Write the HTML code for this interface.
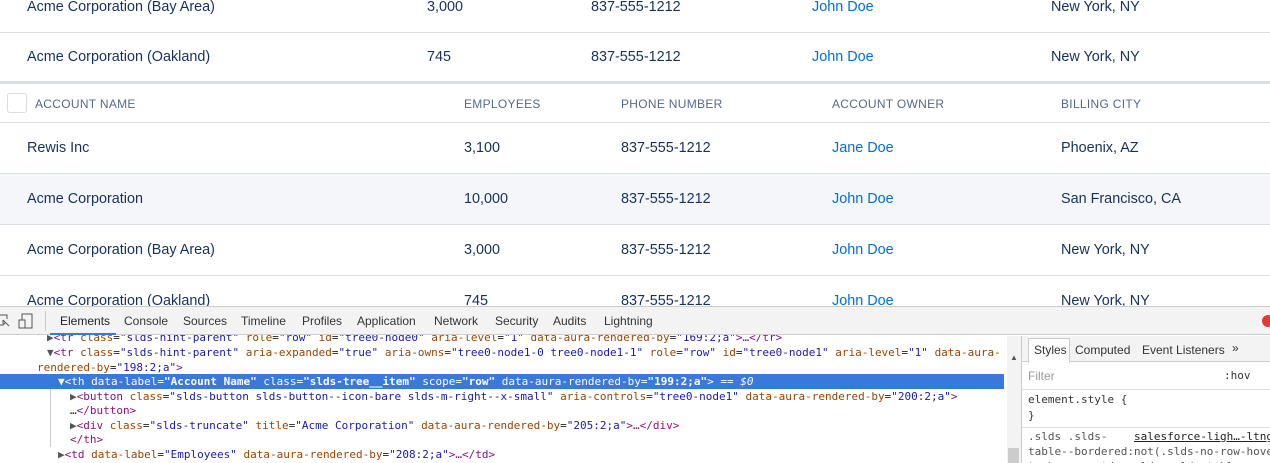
<!DOCTYPE html><html style="width:1270px;height:463px;overflow:hidden"><head><style>
*{margin:0;padding:0;box-sizing:border-box}
body{width:1270px;height:463px;overflow:hidden;background:#fff;font-family:"Liberation Sans",sans-serif;position:relative;color:#16325c}
.a{position:absolute;white-space:nowrap}
.r{position:absolute;left:0;width:1270px;border-bottom:1px solid #d8dde6;font-size:14.4px}
.r span{position:absolute;top:50%;transform:translateY(-50%)}
.l{color:#0070d2}
.h span{font-size:12px;color:#54698d;letter-spacing:.3px}
.dt{position:absolute;left:0;top:306px;width:1270px;height:157px;background:#fff;border-top:1px solid #ccc;overflow:hidden}
.tb{position:absolute;top:0;left:0;width:1270px;height:28px;background:#f3f3f3;border-bottom:1px solid #ccc;font-size:12px;color:#333;z-index:2}
.tb span{position:absolute;top:7px}
.code{position:absolute;left:0;top:23px;width:1007px;height:134px;font-family:"DejaVu Sans Mono",monospace;font-size:11px;color:#222}
.code div{position:absolute;white-space:nowrap;height:15px;line-height:15px}
.t{color:#881280}.n{color:#994500}.v{color:#1a1aa6}
.sel{background:#3879d9;color:#fff}
.sel .t,.sel .n,.sel .v{color:#fff}
</style></head><body>
<div class="r" style="top:-18px;height:51px"><span style="left:27px">Acme Corporation (Bay Area)</span><span style="left:427px">3,000</span><span style="left:591px">837-555-1212</span><span class="l" style="left:812px">John Doe</span><span style="left:1051px">New York, NY</span></div>
<div class="r" style="top:33px;height:51px;border-bottom:3px solid #d8dde6"><span style="left:27px">Acme Corporation (Oakland)</span><span style="left:427px">745</span><span style="left:591px">837-555-1212</span><span class="l" style="left:812px">John Doe</span><span style="left:1051px">New York, NY</span></div>
<div class="r h" style="top:86px;height:37px"><div class="a" style="left:7px;top:7px;width:20px;height:20px;border:1px solid #d8dde6;border-radius:3px"></div><span style="left:35px">ACCOUNT NAME</span><span style="left:464px">EMPLOYEES</span><span style="left:621px">PHONE NUMBER</span><span style="left:832px">ACCOUNT OWNER</span><span style="left:1061px">BILLING CITY</span></div>
<div class="r" style="top:123px;height:51px"><span style="left:27px">Rewis Inc</span><span style="left:464px">3,100</span><span style="left:621px">837-555-1212</span><span class="l" style="left:832px">Jane Doe</span><span style="left:1061px">Phoenix, AZ</span></div>
<div class="r" style="top:174px;height:51px;background:#f4f6f9"><span style="left:27px">Acme Corporation</span><span style="left:464px">10,000</span><span style="left:621px">837-555-1212</span><span class="l" style="left:832px">John Doe</span><span style="left:1061px">San Francisco, CA</span></div>
<div class="r" style="top:225px;height:51px"><span style="left:27px">Acme Corporation (Bay Area)</span><span style="left:464px">3,000</span><span style="left:621px">837-555-1212</span><span class="l" style="left:832px">John Doe</span><span style="left:1061px">New York, NY</span></div>
<div class="r" style="top:276px;height:51px"><span style="left:27px">Acme Corporation (Oakland)</span><span style="left:464px">745</span><span style="left:621px">837-555-1212</span><span class="l" style="left:832px">John Doe</span><span style="left:1061px">New York, NY</span></div>
<div class="dt">
<div class="tb">
<svg class="a" style="left:-4px;top:6px" width="14" height="16"><path d="M2 2h9v4M2 2v10h4M7 7l6 6M7 7v5l2-2" stroke="#555" fill="none"/></svg>
<svg class="a" style="left:17px;top:5px" width="18" height="18"><rect x="5" y="2" width="10" height="14" stroke="#555" fill="none"/><rect x="2" y="8" width="6" height="8" stroke="#555" fill="#f3f3f3"/></svg>
<div class="a" style="left:45px;top:4px;width:1px;height:20px;background:#ccc"></div>
<span style="left:60px;color:#222">Elements</span><div class="a" style="left:50px;top:26px;width:66px;height:2px;background:#3879d9"></div>
<span style="left:124px">Console</span><span style="left:183px">Sources</span><span style="left:241px">Timeline</span><span style="left:302px">Profiles</span><span style="left:357px">Application</span><span style="left:434px">Network</span><span style="left:495px">Security</span><span style="left:553px">Audits</span><span style="left:604px">Lightning</span>
<div class="a" style="left:1262px;top:8px;width:12px;height:12px;border-radius:6px;background:#e53935"></div>
</div>
<div class="code">
<div style="left:47px;top:0"><span style="color:#555">▶</span><span class="t">&lt;tr </span><span class="n">class</span>=<span class="v">"slds-hint-parent"</span> <span class="n">role</span>=<span class="v">"row"</span> <span class="n">id</span>=<span class="v">"tree0-node0"</span> <span class="n">aria-level</span>=<span class="v">"1"</span> <span class="n">data-aura-rendered-by</span>=<span class="v">"169:2;a"</span><span class="t">&gt;…&lt;/tr&gt;</span></div>
<div style="left:47px;top:15px"><span style="color:#555">▼</span><span class="t">&lt;tr </span><span class="n">class</span>=<span class="v">"slds-hint-parent"</span> <span class="n">aria-expanded</span>=<span class="v">"true"</span> <span class="n">aria-owns</span>=<span class="v">"tree0-node1-0 tree0-node1-1"</span> <span class="n">role</span>=<span class="v">"row"</span> <span class="n">id</span>=<span class="v">"tree0-node1"</span> <span class="n">aria-level</span>=<span class="v">"1"</span> <span class="n">data-aura-</span></div>
<div style="left:37px;top:30px"><span class="n">rendered-by</span>=<span class="v">"198:2;a"</span><span class="t">&gt;</span></div>
<div class="sel" style="left:0;top:44px;width:1004px;padding-left:58px">▼<span class="t">&lt;th </span><span class="n">data-label</span>=<b>"Account Name"</b> <span class="n">class</span>=<b>"slds-tree__item"</b> <span class="n">scope</span>=<b>"row"</b> <span class="n">data-aura-rendered-by</span>=<b>"199:2;a"</b><span class="t">&gt;</span> == <i>$0</i></div>
<div style="left:70px;top:59px"><span style="color:#555">▶</span><span class="t">&lt;button </span><span class="n">class</span>=<span class="v">"slds-button slds-button--icon-bare slds-m-right--x-small"</span> <span class="n">aria-controls</span>=<span class="v">"tree0-node1"</span> <span class="n">data-aura-rendered-by</span>=<span class="v">"200:2;a"</span><span class="t">&gt;</span></div>
<div style="left:70px;top:73px">…<span class="t">&lt;/button&gt;</span></div>
<div style="left:70px;top:88px"><span style="color:#555">▶</span><span class="t">&lt;div </span><span class="n">class</span>=<span class="v">"slds-truncate"</span> <span class="n">title</span>=<span class="v">"Acme Corporation"</span> <span class="n">data-aura-rendered-by</span>=<span class="v">"205:2;a"</span><span class="t">&gt;…&lt;/div&gt;</span></div>
<div style="left:70px;top:102px"><span class="t">&lt;/th&gt;</span></div>
<div style="left:58px;top:117px"><span style="color:#555">▶</span><span class="t">&lt;td </span><span class="n">data-label</span>=<span class="v">"Employees"</span> <span class="n">data-aura-rendered-by</span>=<span class="v">"208:2;a"</span><span class="t">&gt;…&lt;/td&gt;</span></div>
<div style="left:50px;top:59px;width:1px;height:58px;background:#ccc"></div>
</div>
<div class="a" style="left:1007px;top:29px;width:14px;height:128px;background:#f3f3f3"><div class="a" style="left:3px;top:17px;font-size:8px;color:#555">▲</div><div class="a" style="left:1px;top:112px;width:11px;height:16px;background:#ccc"></div></div>
<div class="a" style="left:1021px;top:29px;width:1px;height:128px;background:#ccc"></div>
<div class="a" style="left:1022px;top:29px;width:248px;height:128px;background:#fff;font-size:12px;color:#333">
<div class="a" style="left:0;top:0;width:248px;height:26px;background:#f3f3f3;border-bottom:1px solid #ccc"></div>
<div class="a" style="left:6px;top:2px;width:42px;height:25px;background:#fff;border:1px solid #ccc;border-bottom:none"></div>
<span class="a" style="left:12px;top:7px">Styles</span><span class="a" style="left:53px;top:7px">Computed</span><span class="a" style="left:120px;top:7px">Event Listeners</span><span class="a" style="left:210px;top:5px">»</span>
<span class="a" style="left:6px;top:33px;color:#999">Filter</span><span class="a" style="left:202px;top:33px;font-family:'DejaVu Sans Mono',monospace;font-size:11px">:hov</span>
<div class="a" style="left:0;top:53px;width:248px;height:1px;background:#ddd"></div>
<div class="a" style="left:6px;top:56px;font-family:'DejaVu Sans Mono',monospace;font-size:11px;line-height:16px">element.style {<br>}</div>
<div class="a" style="left:0;top:91px;width:248px;height:1px;background:#ddd"></div>
<div class="a" style="left:6px;top:93px;font-family:'DejaVu Sans Mono',monospace;font-size:11px;line-height:15px;color:#555">.slds .slds-&nbsp;&nbsp;&nbsp;&nbsp;<u style="color:#222">salesforce-ligh…-ltng</u><br>table--bordered:not(.slds-no-row-hove<br>tr:hover &gt; td, .slds .slds-table--</div>
</div>
</div>
</body></html>
